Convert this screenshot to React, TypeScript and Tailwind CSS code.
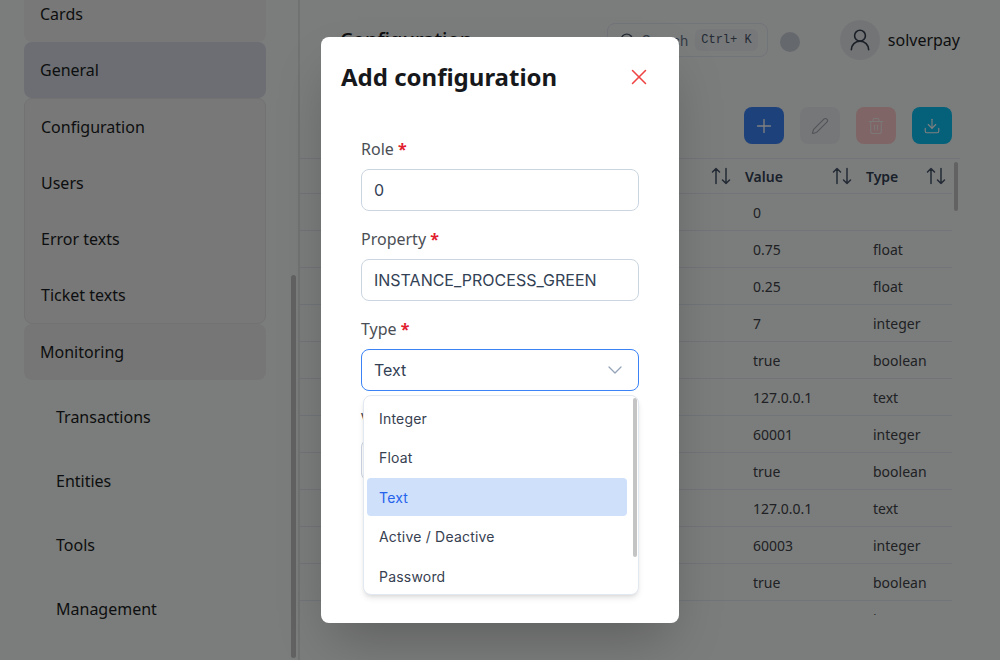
import { ChevronDown, Download, Pen, Plus, Search, Trash2, UserRound, X } from "lucide-react";

const groupLabels = ["Configuration", "Users", "Error texts", "Ticket texts"];
const bottomLinks = ["Transactions", "Entities", "Tools", "Management"];

const rows = [
  { value: "0", type: "" },
  { value: "0.75", type: "float" },
  { value: "0.25", type: "float" },
  { value: "7", type: "integer" },
  { value: "true", type: "boolean" },
  { value: "127.0.0.1", type: "text" },
  { value: "60001", type: "integer" },
  { value: "true", type: "boolean" },
  { value: "127.0.0.1", type: "text" },
  { value: "60003", type: "integer" },
  { value: "true", type: "boolean" },
  { value: "30", type: "integer" },
];

const options = ["Integer", "Float", "Text", "Active / Deactive", "Password"];

function SortIcon() {
  return (
    <svg width="24" height="24" viewBox="0 0 24 24" fill="none" stroke="#475569" strokeWidth="1.5" strokeLinecap="round" strokeLinejoin="round">
      <path d="M7 19.5V4.5M3.5 8 7 4.5 10.5 8M17 4.5v15M13.5 16l3.5 3.5 3.5-3.5" />
    </svg>
  );
}

function Sidebar() {
  return (
    <aside className="relative h-[660px] w-[300px] shrink-0 overflow-hidden border-r-2 border-[#e2e4e4] font-['Noto_Sans',sans-serif] text-[16px] text-[#1a1d22]">
      <div className="-mt-[14px] pl-6 pr-[32px]">
        <div className="flex h-14 items-center rounded-b-lg bg-[#f0f0f0] pl-4">Cards</div>
        <div className="flex h-14 items-center rounded-lg bg-[#d8dde6] pl-4">General</div>
        <div className="rounded-lg border border-[#e4e4e4] bg-[#f0f0f0]">
          {groupLabels.map((label) => (
            <div key={label} className="flex h-14 items-center pl-4">
              {label}
            </div>
          ))}
        </div>
        <div className="flex h-14 items-center rounded-lg bg-[#ececec] pl-4">Monitoring</div>
        <div className="mt-[5px]">
          {bottomLinks.map((label) => (
            <div key={label} className="flex h-16 items-center pl-8">
              {label}
            </div>
          ))}
        </div>
      </div>
      <div className="absolute left-[291px] top-[275px] h-[383px] w-[5px] rounded-full bg-[#c4c4c4]" />
    </aside>
  );
}

function Header() {
  return (
    <header className="flex h-20 items-center pr-10 pl-10">
      <h1 className="text-[20px] font-medium text-[#1a1d22]">Configuration</h1>
      <div className="ml-auto flex h-[34px] w-[161px] items-center rounded-lg border border-[#e2e8f0] pl-[11px]">
        <Search size={17} className="text-[#475569]" />
        <span className="ml-[6px] font-['Inter',sans-serif] text-[14px] text-[#64748b]">Search</span>
        <span className="ml-[7px] rounded-md bg-[#eef0f3] px-[6px] py-[2px] font-['Liberation_Mono',monospace] text-[12px] text-[#475569]">Ctrl+ K</span>
      </div>
      <div className="ml-3 mt-[4px] h-5 w-5 rounded-full bg-[#cbd0d9]" />
      <div className="ml-10 flex h-10 w-10 items-center justify-center rounded-full bg-[#e7e9ec]">
        <UserRound size={26} strokeWidth={1.5} className="text-[#374151]" />
      </div>
      <span className="ml-2 text-[16px] text-[#1a1d22]">solverpay</span>
    </header>
  );
}

function Toolbar() {
  return (
    <div className="mt-[27px] flex justify-end gap-4 pr-12">
      <button className="flex h-[37px] w-10 items-center justify-center rounded-lg bg-[#3b82f6] text-white">
        <Plus size={22} strokeWidth={1.5} />
      </button>
      <button className="flex h-[37px] w-10 items-center justify-center rounded-lg bg-[#eceff3] text-[#a3a8b0]">
        <Pen size={18} strokeWidth={1.5} />
      </button>
      <button className="flex h-[37px] w-10 items-center justify-center rounded-lg bg-[#ffcaca] text-[#f8f0f0]">
        <Trash2 size={18} strokeWidth={1.5} />
      </button>
      <button className="flex h-[37px] w-10 items-center justify-center rounded-lg bg-[#0ac2f5] text-white">
        <Download size={18} strokeWidth={1.5} />
      </button>
    </div>
  );
}

function ConfigTable() {
  return (
    <div className="relative mt-[14px] mr-10 h-[457px] overflow-hidden border-t border-[#e2e8f0] text-[14px]">
      <div className="mr-2">
        <div className="flex h-[35px] items-center border-b border-[#e2e8f0] font-semibold text-[#334155]">
          <div className="flex flex-1 justify-end pr-3">
            <SortIcon />
          </div>
          <div className="flex w-[121px] items-center justify-between pr-3">
            <span>Value</span>
            <SortIcon />
          </div>
          <div className="flex w-[86px] items-center justify-between pr-[4px]">
            <span>Type</span>
            <SortIcon />
          </div>
        </div>
        {rows.map((row, i) => (
          <div key={i} className="flex h-[37px] items-center border-b border-[#e2e8f0] text-[#3f4348]">
            <div className="flex-1" />
            <div className="w-[121px] pl-2">{row.value}</div>
            <div className="w-[86px] pl-[7px]">{row.type}</div>
          </div>
        ))}
      </div>
      <div className="absolute right-[2px] top-[3px] h-[49px] w-[4px] rounded-full bg-[#c4c4c4]" />
    </div>
  );
}

function Field({ label, value }: { label: string; value: string }) {
  return (
    <div>
      <label className="block h-6 font-['Noto_Sans',sans-serif] text-[16px] leading-6 text-[#4b4f55]">
        {label} <span className="font-bold text-[#e11d2e]">*</span>
      </label>
      <div className="mt-2 flex h-[42px] items-center rounded-lg border border-[#cbd5e1] bg-white px-3 font-['Inter',sans-serif] text-[16px] text-[#334155]">
        {value}
      </div>
    </div>
  );
}

function TypeSelect() {
  return (
    <div className="relative">
      <label className="block h-6 font-['Noto_Sans',sans-serif] text-[16px] leading-6 text-[#4b4f55]">
        Type <span className="font-bold text-[#e11d2e]">*</span>
      </label>
      <div className="mt-2 flex h-[42px] items-center justify-between rounded-lg border border-[#3b82f6] bg-white px-3 font-['Inter',sans-serif] text-[16px] text-[#334155]">
        <span>Text</span>
        <ChevronDown size={24} strokeWidth={1.25} className="-mr-[1px] text-[#94a3b8]" />
      </div>
      <div className="absolute left-[2px] right-0 top-full z-10 mt-1 h-[200px] overflow-hidden rounded-lg border border-[#e2e8f0] bg-white py-[3px] pl-[3px] pr-[11px] font-['Inter',sans-serif] text-[14px] tracking-[0.2px] text-[#374151] shadow-md">
        <div className="flex flex-col gap-[1.5px]">
          {options.map((option) => (
            <div
              key={option}
              className={
                option === "Text"
                  ? "flex h-[38px] items-center rounded bg-[#cfe0fb] pl-3 text-[#2563eb]"
                  : "flex h-[38px] items-center pl-3"
              }
            >
              {option}
            </div>
          ))}
        </div>
        <div className="absolute right-[1px] top-[2px] h-[159px] w-[4px] rounded-full bg-[#c4c4c4]" />
      </div>
    </div>
  );
}

function AddDialog() {
  return (
    <div className="absolute inset-0 flex items-center justify-center bg-black/50">
      <div className="h-[586px] w-[358px] overflow-hidden rounded-lg bg-white shadow-2xl">
        <div className="flex items-center justify-between pl-5 pr-[27px] pt-6">
          <h2 className="font-['Noto_Sans',sans-serif] text-[24px] font-bold leading-8 text-[#16181b]">Add configuration</h2>
          <X size={26} strokeWidth={1.4} className="text-[#ef4444]" />
        </div>
        <div className="mt-11 flex flex-col gap-4 px-10">
          <Field label="Role" value="0" />
          <Field label="Property" value="INSTANCE_PROCESS_GREEN" />
          <TypeSelect />
          <Field label="Value" value="" />
        </div>
      </div>
    </div>
  );
}

export default function App() {
  return (
    <div className="relative flex h-[660px] w-[1000px] overflow-hidden bg-[#f7faf9] font-['Noto_Sans',sans-serif]">
      <Sidebar />
      <main className="min-w-0 flex-1">
        <Header />
        <Toolbar />
        <ConfigTable />
      </main>
      <AddDialog />
    </div>
  );
}
